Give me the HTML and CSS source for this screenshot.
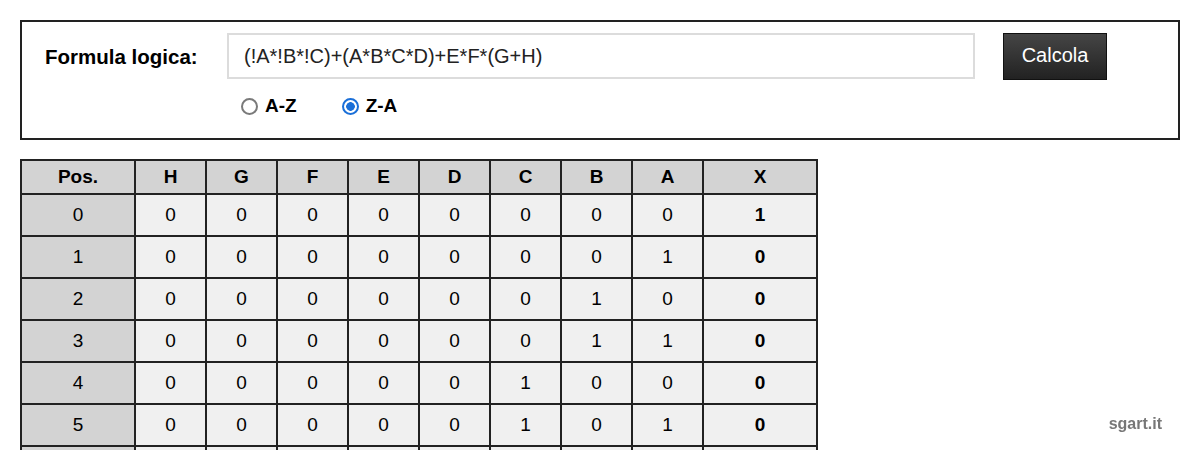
FILE: index.html
```html
<!DOCTYPE html>
<html lang="it">
<head>
<meta charset="utf-8">
<title>Formula logica</title>
<link rel="stylesheet" href="styles.css">
</head>
<body>
<form class="box">
  <label class="lbl" for="f">Formula logica:</label>
  <div class="mid">
    <input id="f" class="formula" type="text" value="(!A*!B*!C)+(A*B*C*D)+E*F*(G+H)">
    <div class="radios">
      <label class="opt"><input type="radio" name="ord"> A-Z</label>
      <label class="opt opt2"><input type="radio" name="ord" checked> Z-A</label>
    </div>
  </div>
  <button type="button" class="btn">Calcola</button>
</form>

<table class="tt">
  <colgroup>
    <col class="c-pos"><col class="c-l"><col class="c-l"><col class="c-l"><col class="c-l"><col class="c-l"><col class="c-l"><col class="c-l"><col class="c-l"><col class="c-x">
  </colgroup>
  <thead>
    <tr><th>Pos.</th><th>H</th><th>G</th><th>F</th><th>E</th><th>D</th><th>C</th><th>B</th><th>A</th><th>X</th></tr>
  </thead>
  <tbody>
    <tr><td class="pos">0</td><td>0</td><td>0</td><td>0</td><td>0</td><td>0</td><td>0</td><td>0</td><td>0</td><td class="x">1</td></tr>
    <tr><td class="pos">1</td><td>0</td><td>0</td><td>0</td><td>0</td><td>0</td><td>0</td><td>0</td><td>1</td><td class="x">0</td></tr>
    <tr><td class="pos">2</td><td>0</td><td>0</td><td>0</td><td>0</td><td>0</td><td>0</td><td>1</td><td>0</td><td class="x">0</td></tr>
    <tr><td class="pos">3</td><td>0</td><td>0</td><td>0</td><td>0</td><td>0</td><td>0</td><td>1</td><td>1</td><td class="x">0</td></tr>
    <tr><td class="pos">4</td><td>0</td><td>0</td><td>0</td><td>0</td><td>0</td><td>1</td><td>0</td><td>0</td><td class="x">0</td></tr>
    <tr><td class="pos">5</td><td>0</td><td>0</td><td>0</td><td>0</td><td>0</td><td>1</td><td>0</td><td>1</td><td class="x">0</td></tr>
    <tr><td class="pos">6</td><td>0</td><td>0</td><td>0</td><td>0</td><td>0</td><td>1</td><td>1</td><td>0</td><td class="x">0</td></tr>
    <tr><td class="pos">7</td><td>0</td><td>0</td><td>0</td><td>0</td><td>0</td><td>1</td><td>1</td><td>1</td><td class="x">0</td></tr>
  </tbody>
</table>

<div class="brand">sgart.it</div>
</body>
</html>
```
FILE: styles.css
```css
html, body {
  margin: 0;
  padding: 0;
  background: #fff;
}
body {
  padding: 20px;
  font-family: "Liberation Sans", Arial, sans-serif;
  color: #000;
}
.box {
  box-sizing: border-box;
  height: 120px;
  border: 2px solid #222;
  padding: 11px 0 0 23px;
  display: flex;
  align-items: flex-start;
  margin: 0;
}
.lbl {
  width: 182px;
  flex: none;
  font-weight: bold;
  font-size: 20.5px;
  line-height: 47px;
  color: #000;
}
.mid {
  width: 748px;
  flex: none;
  display: flex;
  flex-direction: column;
}
.formula {
  box-sizing: border-box;
  width: 748px;
  height: 46px;
  margin: 0;
  border: 2px solid #dcdcdc;
  padding: 0 15px;
  font-family: "Liberation Sans", Arial, sans-serif;
  font-size: 20px;
  color: #222;
  outline: none;
}
.radios {
  display: flex;
  align-items: center;
  margin-top: 16px;
  padding-left: 14px;
}
.opt {
  display: flex;
  align-items: center;
  font-weight: bold;
  font-size: 19px;
  gap: 6px;
}
.opt2 {
  margin-left: 45px;
}
.opt input {
  -webkit-appearance: none;
  appearance: none;
  box-sizing: border-box;
  width: 17px;
  height: 17px;
  margin: 0 1px 0 0;
  border: 2px solid #7a7a7a;
  border-radius: 50%;
  background: #fff;
}
.opt input:checked {
  border-color: #1a6fd8;
  background: radial-gradient(circle, #1a6fd8 0, #1a6fd8 4px, #fff 4.6px);
}
.btn {
  flex: none;
  margin-left: 28px;
  width: 104px;
  height: 47px;
  border: 1px solid #111;
  background: linear-gradient(#454545, #222);
  color: #fff;
  font-family: "Liberation Sans", Arial, sans-serif;
  font-size: 20px;
  padding: 0 0 3px;
  border-radius: 0;
  cursor: pointer;
}
.tt {
  margin-top: 19px;
  border-collapse: collapse;
  table-layout: fixed;
  width: 798px;
  font-size: 19px;
}
.c-pos { width: 114px; }
.c-l { width: 71px; }
.c-x { width: 114px; }
.tt th, .tt td {
  border: 2px solid #222;
  text-align: center;
  vertical-align: middle;
  padding: 0;
}
.tt thead tr { height: 34px; }
.tt tbody tr { height: 42px; }
.tt th {
  background: #d3d3d3;
  font-weight: bold;
}
.tt td {
  background: #f0f0f0;
}
.tt td.pos {
  background: #d3d3d3;
}
.tt td.x {
  font-weight: bold;
}
.brand {
  position: fixed;
  right: 38px;
  bottom: 17px;
  font-size: 16px;
  font-weight: bold;
  color: #777;
}
```
